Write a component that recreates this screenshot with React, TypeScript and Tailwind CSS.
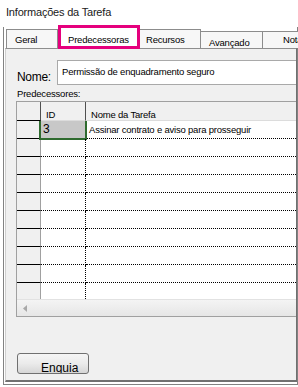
import React from 'react'

const ROWS = Array.from({ length: 10 }, (_, i) => i)

function GridRow({ index }: { index: number }) {
  const first = index === 0
  return (
    <div className="flex h-[18px]">
      <div className="w-[24px] shrink-0 border-r border-b border-r-[#a0a0a0] border-b-black bg-[#f0f0f0]" />
      <div className="relative w-[45px] shrink-0 border-r border-b border-dotted border-black">
        {first && (
          <div className="absolute -left-[2px] -top-[2px] -right-[2px] -bottom-[2px] border-2 border-[#2f6b2f] bg-[#c8c8c8] pl-[2px] text-[12px] leading-[17px] text-black">
            3
          </div>
        )}
      </div>
      <div className="flex-1 border-b border-dotted border-black pl-[3px] pt-[1px] text-[9.5px] leading-[16px] tracking-[-0.2px] whitespace-nowrap">
        {first ? 'Assinar contrato e aviso para prosseguir' : ''}
      </div>
    </div>
  )
}

export default function App() {
  return (
    <div className="h-[387px] w-[298px] overflow-hidden bg-white font-['Liberation_Sans',Arial,sans-serif] text-black">
      <div className="h-[27px] pl-[6px] pt-[5px] text-[11px] leading-[14px] tracking-[-0.2px] text-[#202020]">
        Informações da Tarefa
      </div>

      <div className="ml-[3px] flex h-[358px] w-[295px] flex-col border-x border-b border-[#828282] pb-[2px] pl-[1px]">
        {/* tab strip */}
        <div className="ml-[1px] flex h-[21px] shrink-0 items-end text-[9.5px] leading-[12px] tracking-[-0.2px] whitespace-nowrap">
          <div className="h-[19px] w-[52px] shrink-0 border-x border-t border-[#8c8c8c] bg-[#f7f7f7] pl-[8px] pt-[4px]">Geral</div>
          <div className="relative z-10 -mb-[1px] h-[24px] w-[82px] shrink-0 border-[3px] border-[#e5007d] bg-white pl-[7px] pt-[6px]">
            Predecessoras
          </div>
          <div className="h-[19px] w-[61px] shrink-0 border-r border-t border-[#8c8c8c] bg-[#f7f7f7] pl-[6px] pt-[4px]">Recursos</div>
          <div className="h-[17px] w-[62px] shrink-0 border-r border-t border-[#8c8c8c] bg-[#f7f7f7] pl-[8px] pt-[5px]">Avançado</div>
          <div className="h-[17px] w-[60px] shrink-0 border-t border-[#8c8c8c] bg-[#f7f7f7] pl-[20px] pt-[2px]">Notas</div>
        </div>

        {/* panel */}
        <div className="flex min-h-0 flex-1 flex-col overflow-hidden border-t border-l border-r border-b-2 border-t-[#8e8e8e] border-l-[#cfcfcf] border-r-[#707070] border-b-[#707070] bg-[#f0f0f0]">
          <div className="flex pt-[11px] pl-[11px]">
            <div className="w-[40px] shrink-0 self-end pb-[1px] text-[12px] leading-[14px] tracking-[-0.3px]">Nome:</div>
            <div className="flex h-[25px] w-[260px] shrink-0 items-center border border-[#a9a9a9] bg-white pl-[4px] text-[9.5px] tracking-[-0.2px] whitespace-nowrap">
              Permissão de enquadramento seguro
            </div>
          </div>

          <div className="mt-[3px] mb-[1px] h-[12px] pl-[11px] text-[9.5px] leading-[12px] tracking-[-0.2px]">Predecessores:</div>

          <div className="ml-[10px] w-[300px] shrink-0 border-l border-t border-b border-[#a0a0a0] bg-white">
            <div className="flex h-[19px] bg-[#f0f0f0] text-[9.5px] leading-[11px] tracking-[-0.2px]">
              <div className="w-[24px] shrink-0 border-r border-b border-r-[#505050] border-b-black" />
              <div className="w-[45px] shrink-0 border-r border-b border-r-[#505050] border-b-[#dcdcdc] pl-[5px] pt-[7px]">ID</div>
              <div className="flex-1 border-b border-[#dcdcdc] pl-[5px] pt-[7px] whitespace-nowrap">Nome da Tarefa</div>
            </div>

            <div className="h-[178px] overflow-hidden">
              {ROWS.map((i) => (
                <GridRow key={i} index={i} />
              ))}
            </div>

            <div className="flex h-[17px] items-center border-t border-[#e2e2e2] bg-linear-to-b from-[#f4f4f4] to-[#e6e6e6] pl-[6px]">
              <svg width="4" height="7" viewBox="0 0 4 7">
                <path d="M4 0 L0 3.5 L4 7 Z" fill="#a8a8a8" />
              </svg>
            </div>
          </div>

          <div className="mt-[36px] ml-[11px] h-[21px] w-[72px] shrink-0 overflow-hidden rounded-[3px] border border-[#707070] bg-linear-to-b from-[#f5f5f5] via-[#ebebeb] to-[#d6d6d6] pl-[23px] pt-[7px] text-[12px] leading-[14px]">
            Enguia
          </div>
        </div>
      </div>
    </div>
  )
}
